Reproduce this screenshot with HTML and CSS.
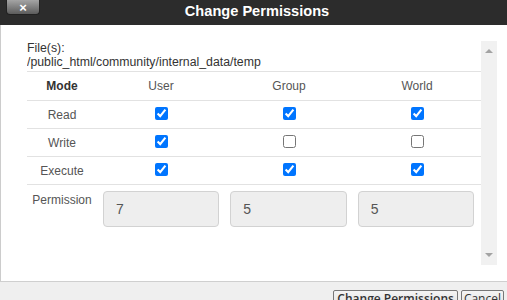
FILE: index.html
```html
<!DOCTYPE html>
<html lang="en">
<head>
  <meta charset="UTF-8">
  <meta name="viewport" content="width=device-width, initial-scale=1.0">
  <title>Change Permissions</title>
  <link rel="stylesheet" href="styles.css">
</head>
<body>
  <div class="dialog">
    <div class="titlebar">
      <button class="close">&times;</button>
      <h1>Change Permissions</h1>
    </div>

    <div class="content">
      <div class="scroller">
        <div class="scroll-body">
          <div class="files">
            <div>File(s):</div>
            <div>/public_html/community/internal_data/temp</div>
          </div>

          <table class="perms">
            <colgroup>
              <col class="mode-col">
              <col><col><col>
            </colgroup>
            <tr>
              <th class="mode">Mode</th>
              <th>User</th>
              <th>Group</th>
              <th>World</th>
            </tr>
            <tr>
              <td>Read</td>
              <td><input type="checkbox" checked></td>
              <td><input type="checkbox" checked></td>
              <td><input type="checkbox" checked></td>
            </tr>
            <tr>
              <td>Write</td>
              <td><input type="checkbox" checked></td>
              <td><input type="checkbox"></td>
              <td><input type="checkbox"></td>
            </tr>
            <tr>
              <td>Execute</td>
              <td><input type="checkbox" checked></td>
              <td><input type="checkbox" checked></td>
              <td><input type="checkbox" checked></td>
            </tr>
            <tr class="octal-row">
              <td class="octal-label">Permission</td>
              <td colspan="3">
                <div class="octals">
                  <input type="text" value="7" readonly>
                  <input type="text" value="5" readonly>
                  <input type="text" value="5" readonly>
                </div>
              </td>
            </tr>
          </table>
        </div>
        <div class="scrollbar">
          <span class="arrow up"></span>
          <span class="arrow down"></span>
        </div>
      </div>
    </div>

    <div class="footer">
      <button class="btn primary">Change Permissions</button>
      <button class="btn">Cancel</button>
    </div>
  </div>
</body>
</html>
```

FILE: styles.css
```css
body{
  margin: 0;
  font-family: 'Liberation Sans', Arial, sans-serif;
  font-size: 12px;
  color: #333;
}
.dialog{
  width: 507px;
  height: 300px;
  display: flex;
  flex-direction: column;
  overflow: hidden;
}
.titlebar{
  height: 25px;
  flex-shrink: 0;
  background: #2c2c2c;
  display: flex;
  align-items: flex-start;
}
.titlebar h1{
  flex: 1;
  margin: 0;
  padding-right: 33px;
  font-size: 14.6px;
  line-height: 22px;
  color: #fff;
  text-align: center;
}
.close{
  width: 34px;
  height: 15px;
  margin-left: 6px;
  padding: 0;
  border: 1px solid #222;
  border-top: 0;
  border-radius: 0 0 4px 4px;
  background: linear-gradient(#a4a4a4, #5c5c5c);
  color: #fff;
  font-family: 'Liberation Sans', Arial, sans-serif;
  font-size: 13px;
  font-weight: bold;
  line-height: 13px;
}
.content{
  flex: 1;
  background: #fff;
  border-left: 1px solid #ccc;
  padding: 16px 10px 0 26px;
}
.scroller{
  height: 224px;
  display: flex;
}
.scroll-body{
  flex: 1;
  overflow: hidden;
}
.files{
  font-size: 12.3px;
  line-height: 14px;
  color: #333;
  padding-bottom: 2px;
  border-bottom: 1px solid #e2e2e2;
}
.perms{
  width: 100%;
  border-collapse: collapse;
  table-layout: fixed;
  font-size: 12px;
}
.perms .mode-col{
  width: 70px;
}
.perms th, .perms td{
  padding: 0;
  text-align: center;
  color: #555;
  font-weight: normal;
  line-height: 14px;
}
.perms th{
  height: 28px;
  border-bottom: 1px solid #e2e2e2;
}
.perms th.mode{
  font-weight: bold;
  color: #333;
}
.perms td{
  height: 27px;
  border-bottom: 1px solid #e2e2e2;
}
.perms input[type=checkbox]{
  margin: 0 0 2px;
  vertical-align: middle;
}
.perms .octal-row td{
  border-bottom: 0;
  height: auto;
  vertical-align: top;
}
.perms td.octal-label{
  padding-top: 8px;
}
.octals{
  display: flex;
  gap: 11px;
  padding: 6px 7px 0 6px;
}
.octals input{
  flex: 1;
  min-width: 0;
  height: 36px;
  box-sizing: border-box;
  padding: 0 12px;
  background: #eee;
  border: 1px solid #d2d2d2;
  border-radius: 4px;
  font-family: 'Liberation Sans', Arial, sans-serif;
  font-size: 14px;
  color: #555;
}
.scrollbar{
  width: 16px;
  background: #f1f1f1;
  display: flex;
  flex-direction: column;
  justify-content: space-between;
  align-items: center;
  padding: 8px 0;
  box-sizing: border-box;
}
.arrow{
  width: 0;
  height: 0;
  border-left: 4px solid transparent;
  border-right: 4px solid transparent;
}
.arrow.up{
  border-bottom: 4px solid #a3a3a3;
}
.arrow.down{
  border-top: 4px solid #a3a3a3;
}
.footer{
  height: 19px;
  box-sizing: border-box;
  flex-shrink: 0;
  background: #efefef;
  border-top: 1px solid #cfcfcf;
  display: flex;
  justify-content: flex-end;
  align-items: flex-start;
  gap: 3px;
  padding: 8px 3px 0 0;
}
.btn{
  flex-shrink: 0;
  font-family: 'Open Sans', sans-serif;
  font-size: 12px;
  line-height: 16px;
  color: #333;
  background: linear-gradient(#f4f4f4, #dcdcdc);
  border: 1px solid #777;
  border-radius: 2px;
  padding: 0 2px 4px;
}
.btn.primary{
  font-weight: 600;
  padding: 0 3px 4px;
}
```
